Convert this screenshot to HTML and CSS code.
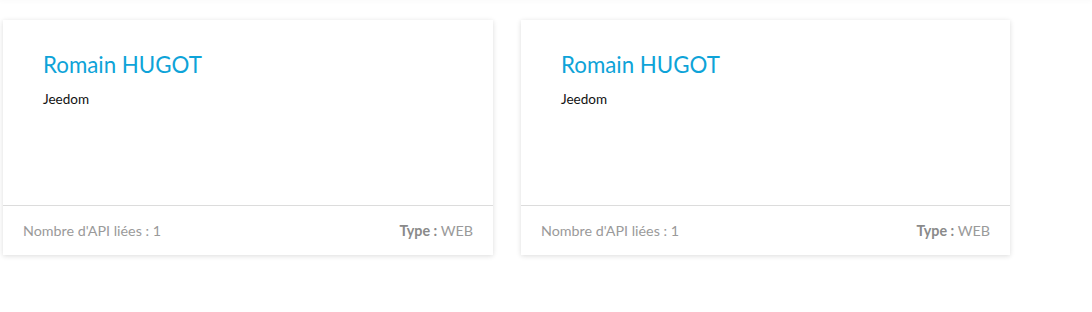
FILE: index.html
```html
<!DOCTYPE html>
<html lang="fr">
<head>
<meta charset="utf-8">
<link rel="stylesheet" href="styles.css">
</head>
<body>
<div class="topbar"></div>
<div class="grid">
  <div class="card">
    <div class="card-body">
      <h2 class="card-title">Romain HUGOT</h2>
      <p class="card-org">Jeedom</p>
    </div>
    <div class="card-footer">
      <span>Nombre d'API liées : 1</span>
      <span><b>Type :</b> WEB</span>
    </div>
  </div>
  <div class="card">
    <div class="card-body">
      <h2 class="card-title">Romain HUGOT</h2>
      <p class="card-org">Jeedom</p>
    </div>
    <div class="card-footer">
      <span>Nombre d'API liées : 1</span>
      <span><b>Type :</b> WEB</span>
    </div>
  </div>
</div>
</body>
</html>
```
FILE: styles.css
```css
html, body {
  margin: 0;
  padding: 0;
  background: #fff;
  font-family: Lato, "Open Sans", sans-serif;
}
body {
  min-height: 312px;
}
.topbar {
  height: 0;
  box-shadow: 0 0 4px 1px rgba(0,0,0,0.04);
}
.grid {
  display: grid;
  grid-template-columns: 490px 489px;
  gap: 28px;
  padding: 20px 0 40px 3px;
}
.card {
  background: #fff;
  box-shadow: 0 1px 5px rgba(0,0,0,0.14);
  display: flex;
  flex-direction: column;
}
.card-body {
  height: 186px;
  padding: 0 40px;
  box-sizing: border-box;
  border-bottom: 1px solid #dcdcdc;
}
.card-title {
  margin: 30px 0 0;
  font-size: 22.3px;
  line-height: 30px;
  font-weight: 400;
  color: #0ea3d8;
}
.card-org {
  margin: 10px 0 0;
  font-size: 13.5px;
  line-height: 18px;
  color: #111;
}
.card-footer {
  height: 49px;
  padding: 0 20px;
  display: flex;
  justify-content: space-between;
  align-items: center;
  font-size: 14.3px;
  color: #9a9a9a;
}
.card-footer b {
  font-weight: 700;
  color: #8a8a8a;
}
```
